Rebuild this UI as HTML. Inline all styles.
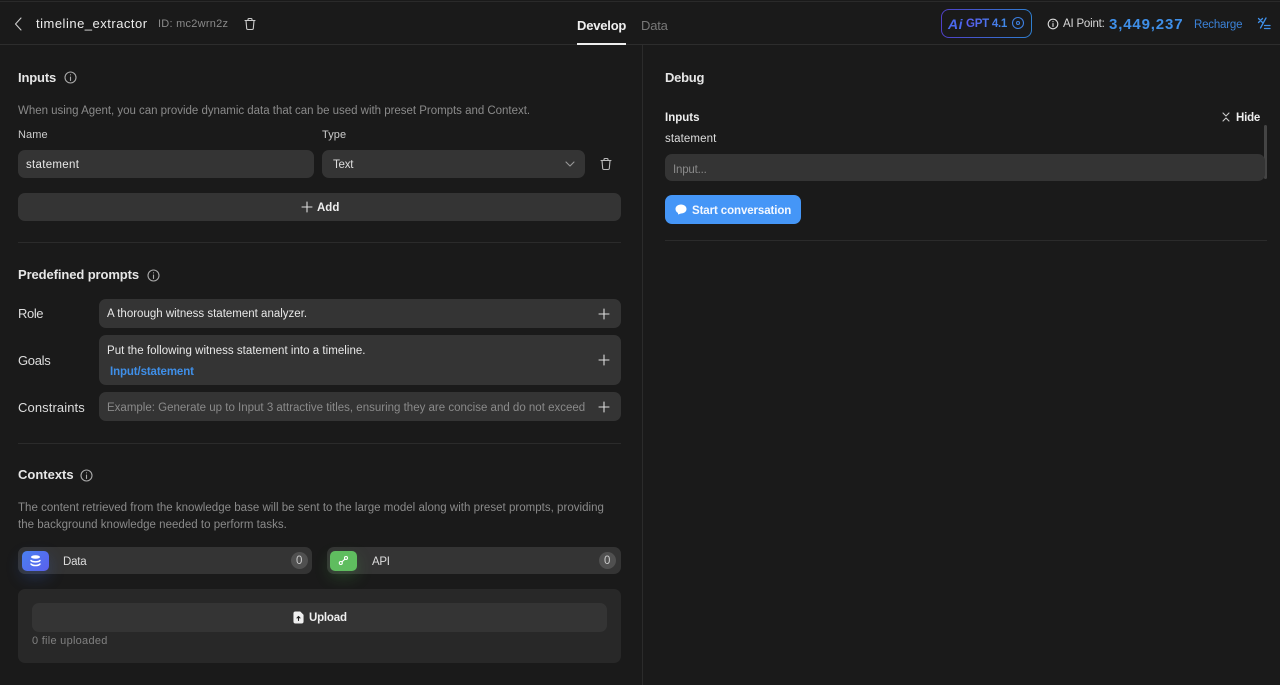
<!DOCTYPE html>
<html><head><meta charset="utf-8"><style>
html,body{margin:0;padding:0;background:#1a1a1a;}
#p{position:relative;width:1280px;height:685px;overflow:hidden;background:#1a1a1a;font-family:"Liberation Sans",sans-serif;color:#e8e8e8;font-size:12px;}
#p div,#p svg{position:absolute;}
.t{white-space:nowrap;line-height:16px;letter-spacing:0;}
.h{font-size:13px;font-weight:bold;color:#e6e6e6;}
.g{color:#8a8a8a;font-size:11.5px;letter-spacing:0;}
.b{background:#343434;border-radius:7px;}
.l{background:#2b2b2b;height:1px;}
svg{fill:none;stroke:#ddd;stroke-width:1.1;stroke-linecap:round;stroke-linejoin:round;}
</style></head><body><div id="p">
<div class="l" style="left:0;top:1px;width:1280px;background:#2a2a2a"></div>
<div class="l" style="left:0;top:44px;width:1280px;background:#2d2d2d"></div>
<div style="left:642px;top:45px;width:1px;height:640px;background:#2b2b2b"></div>

<svg style="left:12px;top:16px" width="12" height="16" viewBox="0 0 12 16"><path d="M9 2 L3.500 8 L9 14" stroke="#ccc"/></svg>
<div class="t" style="left:36px;top:16px;font-size:13px;color:#ececec;letter-spacing:.5px">timeline_extractor</div>
<div class="t g" style="left:158px;top:16px;font-size:11px;letter-spacing:.25px">ID: mc2wrn2z</div>
<svg style="left:244px;top:17px" width="12" height="14" viewBox="0 0 12 14"><path d="M1 3.500H11M4 3.500V2.500Q4 1.500 5 1.500H7Q8 1.500 8 2.500V3.500M2 3.500L2.700 11.500Q2.800 12.500 4 12.500H8Q9.200 12.500 9.300 11.500L10 3.500" stroke="#ccc"/></svg>

<div class="t" style="left:577px;top:18px;font-size:13px;font-weight:bold;color:#f0f0f0;letter-spacing:-.2px">Develop</div>
<div style="left:577px;top:43px;width:49px;height:2px;background:#eee"></div>
<div class="t" style="left:641px;top:18px;font-size:13px;color:#777;letter-spacing:-.2px">Data</div>

<div style="left:941px;top:9px;width:89px;height:27px;border:1px solid transparent;border-radius:8px;background:linear-gradient(#1a1a1a,#1a1a1a) padding-box,linear-gradient(90deg,#5040c8,#2f7fd0) border-box"></div>
<div class="t" style="left:948px;top:16px;font-size:14px;font-weight:bold;font-style:italic;color:#4a68ec;letter-spacing:.5px">Ai</div>
<div class="t" style="left:966px;top:16px;font-size:11.5px;font-weight:bold;letter-spacing:-.25px;color:transparent;background:linear-gradient(90deg,#5b5cf0,#3f8be8);-webkit-background-clip:text;background-clip:text">GPT 4.1</div>
<svg style="left:1011px;top:16px" width="14" height="14" viewBox="0 0 14 14"><circle cx="7" cy="7" r="5.500" stroke="#3d7fe0"/><circle cx="7" cy="7" r="1.500" stroke="#3d7fe0"/></svg>
<svg style="left:1047px;top:18px" width="12" height="12" viewBox="0 0 12 12"><circle cx="6" cy="6" r="4.800"/><path d="M6 5.500V8.500M6 3.600V3.700"/></svg>
<div class="t" style="left:1063px;top:16px;font-size:11.5px;color:#d8d8d8;letter-spacing:-.2px">AI Point:</div>
<div class="t" style="left:1109px;top:17px;font-size:15px;font-weight:bold;color:#3f8fe8;letter-spacing:.85px">3,449,237</div>
<div class="t" style="left:1194px;top:17px;font-size:11.5px;color:#3b82d8;letter-spacing:-.2px">Recharge</div>
<svg style="left:1257px;top:17px" width="14" height="14" viewBox="0 0 14 14"><path d="M1.500 1.500L5.500 5.500M5.500 1.500L1.500 5.500M9 1L3.500 11M7.500 8.500H13M7.500 11.500H13" stroke="#3f8fe8" stroke-width="1.300"/></svg>

<div class="t h" style="left:18px;top:70px;letter-spacing:-.15px">Inputs</div>
<svg style="left:64px;top:71px" width="13" height="13" viewBox="0 0 13 13"><circle cx="6.500" cy="6.500" r="5.500" stroke="#aaa"/><path d="M6.500 6V9.500M6.500 3.800V3.900" stroke="#aaa"/></svg>
<div class="t g" style="left:18px;top:103px;letter-spacing:-.02px">When using Agent, you can provide dynamic data that can be used with preset Prompts and Context.</div>
<div class="t" style="left:18px;top:127px;font-size:11px;color:#ccc;letter-spacing:.1px">Name</div>
<div class="t" style="left:322px;top:127px;font-size:11px;color:#ccc;letter-spacing:.1px">Type</div>
<div class="b" style="left:18px;top:150px;width:296px;height:28px"></div>
<div class="t" style="left:26px;top:157px;font-size:11.5px;letter-spacing:.3px">statement</div>
<div class="b" style="left:322px;top:150px;width:263px;height:28px"></div>
<div class="t" style="left:333px;top:157px;font-size:11.5px;color:#ddd;letter-spacing:-.2px">Text</div>
<svg style="left:565px;top:160px" width="10" height="8" viewBox="0 0 10 8"><path d="M1 2L5 6L9 2" stroke="#999"/></svg>
<svg style="left:600px;top:157px" width="12" height="14" viewBox="0 0 12 14"><path d="M1 3.500H11M4 3.500V2.500Q4 1.500 5 1.500H7Q8 1.500 8 2.500V3.500M2 3.500L2.700 11.500Q2.800 12.500 4 12.500H8Q9.200 12.500 9.300 11.500L10 3.500" stroke="#bbb"/></svg>
<div class="b" style="left:18px;top:193px;width:603px;height:28px"></div>
<svg style="left:301px;top:201px" width="12" height="12" viewBox="0 0 12 12"><path d="M6 1V11M1 6H11"/></svg>
<div class="t" style="left:317px;top:200px;font-size:11.5px;font-weight:bold;color:#eee">Add</div>
<div class="l" style="left:18px;top:242px;width:603px"></div>

<div class="t h" style="left:18px;top:267px;letter-spacing:-.1px">Predefined prompts</div>
<svg style="left:147px;top:269px" width="13" height="13" viewBox="0 0 13 13"><circle cx="6.500" cy="6.500" r="5.500" stroke="#aaa"/><path d="M6.500 6V9.500M6.500 3.800V3.900" stroke="#aaa"/></svg>
<div class="t" style="left:18px;top:306px;font-size:13px;color:#ddd;letter-spacing:-.4px">Role</div>
<div class="b" style="left:99px;top:299px;width:522px;height:29px"></div>
<div class="t" style="left:107px;top:306px;font-size:11.5px">A thorough witness statement analyzer.</div>
<svg style="left:598px;top:308px" width="12" height="12" viewBox="0 0 12 12"><path d="M6 1V11M1 6H11"/></svg>
<div class="t" style="left:18px;top:353px;font-size:13px;color:#ddd;letter-spacing:-.3px">Goals</div>
<div class="b" style="left:99px;top:335px;width:522px;height:50px"></div>
<div class="t" style="left:107px;top:343px;font-size:11.5px;letter-spacing:.03px">Put the following witness statement into a timeline.</div>
<div class="t" style="left:110px;top:364px;font-size:11.5px;font-weight:bold;color:#3f8fe8;letter-spacing:-.12px">Input/statement</div>
<svg style="left:598px;top:354px" width="12" height="12" viewBox="0 0 12 12"><path d="M6 1V11M1 6H11"/></svg>
<div class="t" style="left:18px;top:400px;font-size:13px;color:#ddd;letter-spacing:.1px">Constraints</div>
<div class="b" style="left:99px;top:392px;width:522px;height:29px"></div>
<div class="t g" style="left:107px;top:400px">Example: Generate up to Input 3 attractive titles, ensuring they are concise and do not exceed</div>
<svg style="left:598px;top:401px" width="12" height="12" viewBox="0 0 12 12"><path d="M6 1V11M1 6H11"/></svg>
<div class="l" style="left:18px;top:443px;width:603px"></div>

<div class="t h" style="left:18px;top:467px">Contexts</div>
<svg style="left:80px;top:469px" width="13" height="13" viewBox="0 0 13 13"><circle cx="6.500" cy="6.500" r="5.500" stroke="#aaa"/><path d="M6.500 6V9.500M6.500 3.800V3.900" stroke="#aaa"/></svg>
<div class="t g" style="left:18px;top:500px;letter-spacing:.02px">The content retrieved from the knowledge base will be sent to the large model along with preset prompts, providing</div>
<div class="t g" style="left:18px;top:517px;letter-spacing:.02px">the background knowledge needed to perform tasks.</div>

<div class="b" style="left:18px;top:547px;width:294px;height:27px"></div>
<div style="left:22px;top:551px;width:27px;height:20px;border-radius:5px;background:linear-gradient(135deg,#4a80f0,#5a60ee);box-shadow:0 6px 16px rgba(60,110,240,.25)"></div>
<svg style="left:29px;top:554px" width="13" height="14" viewBox="0 0 13 14"><ellipse cx="6.500" cy="3" rx="4.500" ry="1.800" fill="#fff" stroke="none"/><path d="M2 6.500C3.500 8.300 9.500 8.300 11 6.500M2 10C3.500 12 9.500 12 11 10" stroke="#fff" stroke-width="1.500"/></svg>
<div class="t" style="left:63px;top:554px;font-size:11.5px;color:#ddd;letter-spacing:-.2px">Data</div>
<div style="left:291px;top:552px;width:17px;height:17px;border-radius:50%;background:#505050"></div>
<div class="t" style="left:296px;top:553px;font-size:11.5px;color:#ccc">0</div>

<div class="b" style="left:327px;top:547px;width:294px;height:27px"></div>
<div style="left:330px;top:551px;width:27px;height:20px;border-radius:5px;background:#5fbd5f;box-shadow:0 6px 16px rgba(80,200,80,.22)"></div>
<svg style="left:337px;top:554px" width="13" height="13" viewBox="0 0 13 13"><circle cx="3.800" cy="9" r="1.500" stroke="#fff"/><circle cx="9" cy="4" r="1.500" stroke="#fff"/><path d="M5 7.800L7.800 5.200" stroke="#fff"/></svg>
<div class="t" style="left:372px;top:554px;font-size:11.5px;color:#ddd;letter-spacing:-.3px">API</div>
<div style="left:599px;top:552px;width:17px;height:17px;border-radius:50%;background:#505050"></div>
<div class="t" style="left:604px;top:553px;font-size:11.5px;color:#ccc">0</div>

<div style="left:18px;top:589px;width:603px;height:74px;border-radius:7px;background:#282828"></div>
<div class="b" style="left:32px;top:603px;width:575px;height:29px"></div>
<svg style="left:293px;top:611px" width="11" height="13" viewBox="0 0 11 13"><path d="M1 2.500Q1 1 2.500 1H7L10 4V10.500Q10 12 8.500 12H2.500Q1 12 1 10.500Z" fill="#f0f0f0" stroke="#f0f0f0"/><path d="M5.500 9.500V5.500M4 7L5.500 5.500L7 7" stroke="#222"/></svg>
<div class="t" style="left:309px;top:610px;font-size:11.5px;font-weight:bold;color:#eee;letter-spacing:-.2px">Upload</div>
<div class="t g" style="left:32px;top:633px;font-size:11px;color:#808080;letter-spacing:.27px">0 file uploaded</div>

<div class="t h" style="left:665px;top:70px;letter-spacing:-.25px">Debug</div>
<div class="t" style="left:665px;top:110px;font-size:11.5px;font-weight:bold;color:#eee">Inputs</div>
<svg style="left:1222px;top:112px" width="8" height="10" viewBox="0 0 8 10"><path d="M1 1L4 4L7 1M1 9L4 6L7 9" stroke="#ccc"/></svg>
<div class="t" style="left:1236px;top:110px;font-size:11.5px;font-weight:bold;color:#eee;letter-spacing:-.2px">Hide</div>
<div class="t" style="left:665px;top:131px;font-size:11.5px;color:#ddd;letter-spacing:.1px">statement</div>
<div style="left:1264px;top:125px;width:3px;height:54px;background:#444;border-radius:2px"></div>
<div class="b" style="left:665px;top:154px;width:600px;height:27px"></div>
<div class="t g" style="left:673px;top:162px;letter-spacing:-.2px">Input...</div>
<div style="left:665px;top:195px;width:136px;height:29px;border-radius:7px;background:#4596f7"></div>
<svg style="left:675px;top:204px" width="12" height="11" viewBox="0 0 12 11"><path d="M6 .5C9 .5 11.500 2.300 11.500 5C11.500 7.700 9 9.500 6 9.500L3 10.500L3 9C1.500 8.200 .5 6.800 .5 5C.5 2.300 3 .5 6 .5Z" fill="#fff" stroke="none"/></svg>
<div class="t" style="left:692px;top:203px;font-size:11.5px;font-weight:bold;color:#f4f8ff;letter-spacing:-.1px">Start conversation</div>
<div class="l" style="left:665px;top:240px;width:602px"></div>
</div></body></html>
